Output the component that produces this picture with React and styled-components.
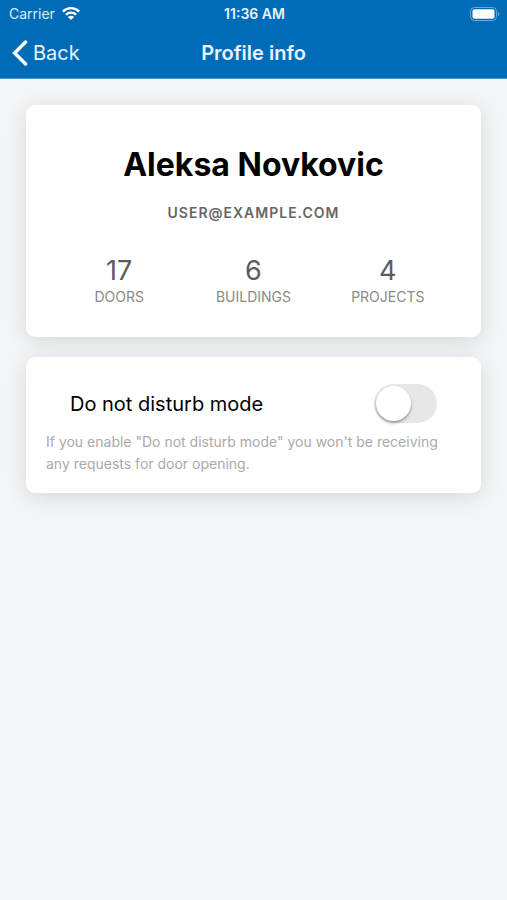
import { useState } from 'react'
import styled, { createGlobalStyle } from 'styled-components'

const GlobalStyle = createGlobalStyle`
  * {
    box-sizing: border-box;
  }
  body {
    margin: 0;
    background: #f3f5f9;
    color: #000;
    font-family: Inter, 'Liberation Sans', sans-serif;
  }
`

// styled components
const Header = styled.header`
  background: #006cb7;
  border-bottom: 1px solid #4a97cf;
  color: #fff;
`
const Bar = styled.div`
  display: grid;
  grid-template-columns: 1fr auto 1fr;
  align-items: center;
`
const StatusBar = styled(Bar)`
  height: 27px;
  padding: 0 7px 0 9px;
  font-size: 14px;
`
const NavBar = styled(Bar)`
  height: 51px;
  padding: 0 12px;
`
const Carrier = styled.span`
  display: flex;
  align-items: center;
  gap: 7px;
  color: #d8ecfa;
`
const Time = styled.span`
  font-weight: 600;
  color: #e6f3fc;
`
const Battery = styled.svg`
  justify-self: end;
`
const BackButton = styled.button`
  display: flex;
  align-items: center;
  justify-self: start;
  gap: 5px;
  padding: 0;
  border: none;
  background: none;
  color: #e6f3fc;
  font-family: inherit;
  font-size: 20px;
  cursor: pointer;
`
const NavTitle = styled.h1`
  margin: 0;
  font-size: 20px;
  font-weight: 600;
  color: #e6f3fc;
`
const Main = styled.main`
  display: flex;
  flex-direction: column;
  gap: 20px;
  padding: 26px;
`
const Card = styled.section`
  padding: ${(props) => props.$padding};
  border-radius: 9px;
  background: #fff;
  box-shadow: 0 4px 22px rgba(0, 0, 0, 0.12);
`
const Name = styled.h2`
  margin: 0;
  font-size: 32px;
  line-height: 40px;
  font-weight: 700;
  text-align: center;
`
const Email = styled.p`
  margin: 19px 0 33px;
  color: #666;
  font-size: 14px;
  line-height: 18px;
  font-weight: 600;
  letter-spacing: 1px;
  text-align: center;
  text-transform: uppercase;
`
const Stats = styled.dl`
  display: grid;
  grid-template-columns: repeat(3, 1fr);
  margin: 0;
  text-align: center;
`
const Stat = styled.div`
  display: flex;
  flex-direction: column-reverse;
`
const StatValue = styled.dd`
  margin: 0;
  color: #5c5c5c;
  font-size: 27px;
  line-height: 32px;
`
const StatLabel = styled.dt`
  color: #8a8a8a;
  font-size: 14px;
  line-height: 20px;
  text-transform: uppercase;
`
const SettingRow = styled.div`
  display: flex;
  align-items: center;
  justify-content: space-between;
  padding: 0 24px;
`
const SettingLabel = styled.label`
  font-size: 20px;
  line-height: 24px;
`
const Switch = styled.input`
  appearance: none;
  display: flex;
  width: 63px;
  height: 39px;
  margin: 0;
  padding: 2px;
  border-radius: 20px;
  background: #e7e7e7;
  cursor: pointer;

  &::before {
    content: '';
    width: 35px;
    height: 35px;
    border-radius: 50%;
    background: #fff;
    box-shadow: 0 2px 3px rgba(0, 0, 0, 0.35);
  }
  &:checked {
    justify-content: flex-end;
    background: #006cb7;
  }
`
const Hint = styled.p`
  margin: 8px 0 0;
  color: #aaa;
  font-size: 14px;
  line-height: 22px;
`

const stats = [
  { label: 'Doors', value: 17 },
  { label: 'Buildings', value: 6 },
  { label: 'Projects', value: 4 }
]

function WifiIcon() {
  return (
    <svg width='18' height='14' viewBox='0 0 18 14' aria-hidden='true'>
      <g fill='none' stroke='#fff' strokeWidth='2.3'>
        <path d='M0.9 4.6a11.4 11.4 0 0 1 16.2 0' />
        <path d='M3.9 7.8a7.2 7.2 0 0 1 10.2 0' />
      </g>
      <path d='M9 13.1L5.9 10a4.4 4.4 0 0 1 6.2 0z' fill='#fff' />
    </svg>
  )
}

function BatteryIcon() {
  return (
    <Battery width='30' height='14' viewBox='0 0 30 14' aria-hidden='true'>
      <rect
        x='0.5'
        y='0.5'
        width='26'
        height='13'
        rx='4'
        fill='none'
        stroke='#69aadb'
      />
      <rect x='2.5' y='2.2' width='22' height='9.6' rx='2' fill='#fff' />
      <path d='M28 4.5a3 3 0 0 1 0 5z' fill='#69aadb' />
    </Battery>
  )
}

function BackIcon() {
  return (
    <svg width='16' height='26' viewBox='0 0 16 26' aria-hidden='true'>
      <path
        d='M13.6 2L2.6 13l11 11'
        fill='none'
        stroke='#fff'
        strokeWidth='3.4'
        strokeLinecap='round'
      />
    </svg>
  )
}

export default function App() {
  const [doNotDisturb, setDoNotDisturb] = useState(false)

  return (
    <>
      <GlobalStyle />
      <Header>
        <StatusBar>
          <Carrier>
            Carrier
            <WifiIcon />
          </Carrier>
          <Time>11:36 AM</Time>
          <BatteryIcon />
        </StatusBar>
        <NavBar>
          <BackButton type='button'>
            <BackIcon />
            Back
          </BackButton>
          <NavTitle>Profile info</NavTitle>
        </NavBar>
      </Header>

      <Main>
        <Card $padding='40px 26px 30px'>
          <Name>Aleksa Novkovic</Name>
          <Email>user@example.com</Email>
          <Stats>
            {stats.map(({ label, value }) => (
              <Stat key={label}>
                <StatLabel>{label}</StatLabel>
                <StatValue>{value}</StatValue>
              </Stat>
            ))}
          </Stats>
        </Card>

        <Card $padding='27px 20px 18px'>
          <SettingRow>
            <SettingLabel htmlFor='dnd'>Do not disturb mode</SettingLabel>
            <Switch
              id='dnd'
              type='checkbox'
              role='switch'
              checked={doNotDisturb}
              onChange={(e) => setDoNotDisturb(e.target.checked)}
            />
          </SettingRow>
          <Hint>
            If you enable "Do not disturb mode" you won't be receiving any
            requests for door opening.
          </Hint>
        </Card>
      </Main>
    </>
  )
}
